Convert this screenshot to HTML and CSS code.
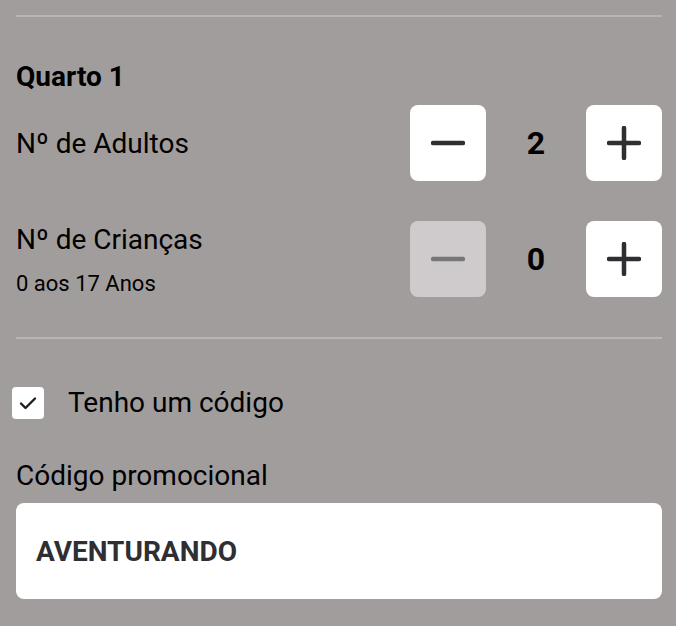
FILE: index.html
```html
<!DOCTYPE html>
<html lang="pt">
<head>
<meta charset="utf-8">
<link rel="stylesheet" href="styles.css">
</head>
<body>
<div class="panel">
  <hr class="divider first">
  <h2 class="room-title">Quarto 1</h2>
  <div class="row row-adults">
    <div class="label-group">
      <div class="label">Nº de Adultos</div>
    </div>
    <div class="stepper">
      <button class="step-btn" aria-label="menos">
        <svg viewBox="0 0 34 34" width="34" height="34"><path d="M2 17H32" /></svg>
      </button>
      <span class="count">2</span>
      <button class="step-btn" aria-label="mais">
        <svg viewBox="0 0 34 34" width="34" height="34"><path d="M2 17H32M17 2V32" /></svg>
      </button>
    </div>
  </div>
  <div class="row row-children">
    <div class="label-group">
      <div class="label">Nº de Crianças</div>
      <div class="sublabel">0 aos 17 Anos</div>
    </div>
    <div class="stepper">
      <button class="step-btn disabled" aria-label="menos">
        <svg viewBox="0 0 34 34" width="34" height="34"><path d="M2 17H32" /></svg>
      </button>
      <span class="count">0</span>
      <button class="step-btn" aria-label="mais">
        <svg viewBox="0 0 34 34" width="34" height="34"><path d="M2 17H32M17 2V32" /></svg>
      </button>
    </div>
  </div>
  <hr class="divider second">
  <label class="check-row">
    <span class="checkbox">
      <svg viewBox="0 0 18 18" width="18" height="18"><path d="M2 9.5L6.5 14L16 4.5" /></svg>
    </span>
    <span class="check-text">Tenho um código</span>
  </label>
  <div class="code-label">Código promocional</div>
  <div class="code-input">AVENTURANDO</div>
</div>
</body>
</html>
```
FILE: styles.css
```css
html, body {
  margin: 0;
  padding: 0;
  background: #a29d9d;
}
body {
  font-family: Roboto, "Liberation Sans", sans-serif;
  color: #000;
}
.panel {
  padding: 15px 14px 0 16px;
}
.divider {
  border: 0;
  height: 2px;
  background: #bab5b5;
  margin: 0;
}
.room-title {
  margin: 43px 0 0;
  font-size: 28px;
  line-height: 33px;
  font-weight: 700;
}
.row {
  display: flex;
  align-items: center;
  justify-content: space-between;
}
.row-adults {
  margin-top: 12px;
}
.row-children {
  margin-top: 40px;
}
.label {
  font-size: 28px;
  line-height: 33px;
}
.sublabel {
  font-size: 22px;
  line-height: 26px;
  margin-top: 15px;
}
.row-children .label-group {
  padding-top: 2px;
}
.stepper {
  display: flex;
  align-items: center;
}
.step-btn {
  width: 76px;
  height: 76px;
  border: 0;
  border-radius: 8px;
  background: #fff;
  padding: 0;
  display: flex;
  align-items: center;
  justify-content: center;
}
.step-btn svg path {
  stroke: #2f2f33;
  stroke-width: 4.5;
  stroke-linecap: round;
  fill: none;
}
.step-btn.disabled {
  background: #cfcbcc;
}
.step-btn.disabled svg path {
  stroke: #77767a;
}
.count {
  width: 100px;
  text-align: center;
  font-size: 32px;
  font-weight: 700;
}
.divider.second {
  margin-top: 40px;
}
.check-row {
  display: flex;
  align-items: center;
  margin-top: 47px;
  margin-left: -4px;
}
.checkbox {
  width: 32px;
  height: 32px;
  border-radius: 4px;
  background: #fff;
  display: flex;
  align-items: center;
  justify-content: center;
}
.checkbox svg path {
  stroke: #1f1f22;
  stroke-width: 2.4;
  stroke-linecap: round;
  stroke-linejoin: round;
  fill: none;
}
.check-text {
  margin-left: 24px;
  font-size: 28px;
  line-height: 33px;
}
.code-label {
  margin-top: 40px;
  font-size: 28px;
  line-height: 33px;
}
.code-input {
  margin-top: 11px;
  height: 96px;
  box-sizing: border-box;
  background: #fff;
  border-radius: 8px;
  padding: 0 20px;
  display: flex;
  align-items: center;
  font-size: 28px;
  font-weight: 700;
  color: #2f2f33;
}
```
